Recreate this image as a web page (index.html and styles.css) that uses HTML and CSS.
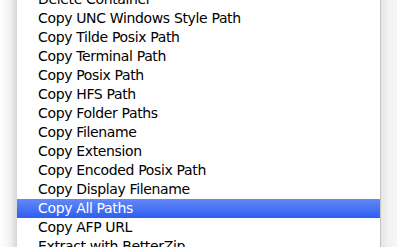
FILE: index.html
```html
<!DOCTYPE html>
<html lang="en">
<head>
    <meta charset="UTF-8">
    <title>Context Menu</title>
    <link rel="stylesheet" href="styles.css">
</head>
<body>
<div class="screen">
    <div class="edge-left"></div>
    <ul class="menu">
        <li>Delete Container</li>
        <li>Copy UNC Windows Style Path</li>
        <li>Copy Tilde Posix Path</li>
        <li>Copy Terminal Path</li>
        <li>Copy Posix Path</li>
        <li>Copy HFS Path</li>
        <li>Copy Folder Paths</li>
        <li>Copy Filename</li>
        <li>Copy Extension</li>
        <li>Copy Encoded Posix Path</li>
        <li>Copy Display Filename</li>
        <li class="selected">Copy All Paths</li>
        <li>Copy AFP URL</li>
        <li>Extract with BetterZip</li>
    </ul>
    <div class="edge-right"></div>
</div>
</body>
</html>
```

FILE: styles.css
```css
body {
    margin: 0;
    padding: 0;
    background: #ffffff;
    font-family: 'DejaVu Sans', 'Liberation Sans', sans-serif;
    overflow: hidden;
}
.screen {
    display: flex;
    width: 397px;
    height: 247px;
    overflow: hidden;
}
.edge-left {
    width: 17px;
    flex-shrink: 0;
    background: linear-gradient(to right, #ffffff, #f2f2f2 60%, #d6d6d6);
}
.menu {
    list-style: none;
    margin: -10px 0 0 0;
    padding: 0;
    width: 363px;
    flex-shrink: 0;
    background: #ffffff;
}
.menu li {
    height: 19px;
    line-height: 19px;
    padding-left: 21px;
    font-size: 14px;
    letter-spacing: -0.35px;
    color: #000000;
    white-space: nowrap;
}
.menu li.selected {
    color: #ffffff;
    background: linear-gradient(#6488f6, #2c5ef3);
}
.edge-right {
    flex: 1;
    border-left: 1px solid #c4c4c4;
    background: linear-gradient(to right, #e6e6e6, #f3f3f3 50%, #f6f6f6);
}
```
